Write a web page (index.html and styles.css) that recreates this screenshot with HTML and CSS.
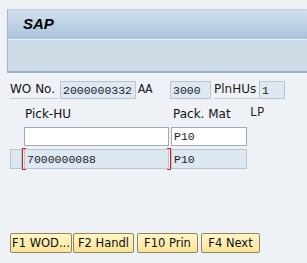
FILE: index.html
```html
<!DOCTYPE html>
<html lang="en">
<head>
    <meta charset="UTF-8">
    <title>SAP</title>
    <link rel="stylesheet" href="styles.css">
</head>
<body>
    <div class="header">
        <div class="title-bar">SAP</div>
        <div class="tool-band"></div>
    </div>

    <div class="form">
        <div class="row top-row">
            <span class="label wo-label">WO No.</span>
            <span class="field ro wo-field">2000000332</span>
            <span class="mono aa">AA</span>
            <span class="field ro whs-field">3000</span>
            <span class="label pln-label">PlnHUs</span>
            <span class="field ro pln-field">1</span>
        </div>

        <div class="row head-row">
            <span class="col-head pick-head">Pick-HU</span>
            <span class="col-head mat-head">Pack. Mat</span>
            <span class="mono lp-head">LP</span>
        </div>

        <div class="row entry-row">
            <span class="field input hu-field"></span>
            <span class="field input mat-field">P10</span>
        </div>

        <div class="row entry-row second">
            <span class="field ro sel-box"></span>
            <span class="field ro hu-field focus">7000000088</span>
            <span class="field ro mat-field">P10</span>
        </div>
    </div>

    <div class="buttons">
        <button class="fkey key-wod">F1 WOD...</button>
        <button class="fkey key-handl">F2 Handl</button>
        <button class="fkey key-prin">F10 Prin</button>
        <button class="fkey key-next">F4 Next</button>
    </div>
</body>
</html>
```

FILE: styles.css
```css
body {
    margin: 0;
    background-color: #eef2f7;
    font-family: "DejaVu Sans", sans-serif;
    font-size: 11px;
    color: #1a1a1a;
    width: 307px;
    height: 263px;
    overflow: hidden;
}

.header {
    margin: 9px 0 0 7px;
    border-left: 1px solid #a6b4c4;
    border-top: 1px solid #c2cfdd;
    border-bottom: 2px solid #9eb0c4;
}

.title-bar {
    height: 29px;
    background: linear-gradient(#d2e0ee, #a8c2dc);
    border-bottom: 1px solid #e6eef6;
    font-family: "Liberation Sans", sans-serif;
    font-weight: bold;
    font-style: italic;
    font-size: 15px;
    line-height: 28px;
    padding-left: 15px;
    color: #000;
}

.tool-band {
    height: 31px;
    background-color: #cddbe7;
}

.form {
    padding-top: 8px;
}

.row {
    display: flex;
    align-items: center;
    position: relative;
}

.field {
    box-sizing: border-box;
    display: flex;
    align-items: center;
    padding-left: 2px;
    font-family: "Liberation Mono", monospace;
    font-size: 11.5px;
    color: #222;
    white-space: nowrap;
    overflow: hidden;
}

.ro {
    background-color: #dde8f2;
    border: 1px solid #b9c4cf;
}

.input {
    background-color: #fff;
    border: 1px solid #9fabb8;
}

.mono {
    font-family: "Liberation Mono", monospace;
    font-size: 12px;
    color: #222;
}

.label {
    border-bottom: 1px solid #c5ced8;
    line-height: 17px;
}

.top-row {
    height: 18px;
}

.wo-label {
    margin-left: 10px;
    width: 48px;
    font-size: 12px;
    color: #111;
}

.wo-field {
    margin-left: 2px;
    width: 76px;
    height: 18px;
}

.aa {
    margin-left: 2px;
    width: 32px;
}

.whs-field {
    width: 41px;
    height: 18px;
}

.pln-label {
    margin-left: 3px;
    width: 45px;
    font-size: 12px;
}

.pln-field {
    width: 26px;
    height: 18px;
}

.head-row {
    height: 26px;
    margin-top: 2px;
}

.col-head {
    font-size: 12px;
    color: #111;
}

.pick-head {
    margin-left: 25px;
    width: 148px;
}

.mat-head {
    width: 77px;
}

.lp-head {
    margin-top: -3px;
}

.entry-row {
    height: 19px;
}

.entry-row.second {
    height: 20px;
    margin-top: 3px;
}

.hu-field {
    margin-left: 24px;
    width: 145px;
    height: 100%;
}

.mat-field {
    margin-left: 2px;
    width: 76px;
    height: 100%;
}

.sel-box {
    margin-left: 10px;
    width: 12px;
    height: 100%;
}

.second .hu-field {
    margin-left: 2px;
    position: relative;
    overflow: visible;
}

.focus::before,
.focus::after {
    content: "";
    position: absolute;
    top: -2px;
    bottom: -2px;
    width: 3px;
    border: 1px solid #d0201c;
}

.focus::before {
    left: -3px;
    border-right: none;
}

.focus::after {
    right: -3px;
    border-left: none;
}

.buttons {
    display: flex;
    margin: 64px 0 0 10px;
}

.fkey {
    height: 20px;
    padding: 0;
    margin-right: 2px;
    background: linear-gradient(#fff6c6, #fbe59a);
    border: 1px solid #8e8460;
    border-radius: 2px;
    font-family: "DejaVu Sans", sans-serif;
    font-size: 11.5px;
    color: #111;
    white-space: nowrap;
}

.key-wod {
    width: 62px;
    margin-right: 1px;
}

.key-handl {
    width: 61px;
    margin-right: 3px;
}

.key-prin {
    width: 61px;
    margin-right: 3px;
}

.key-next {
    width: 59px;
}
```
